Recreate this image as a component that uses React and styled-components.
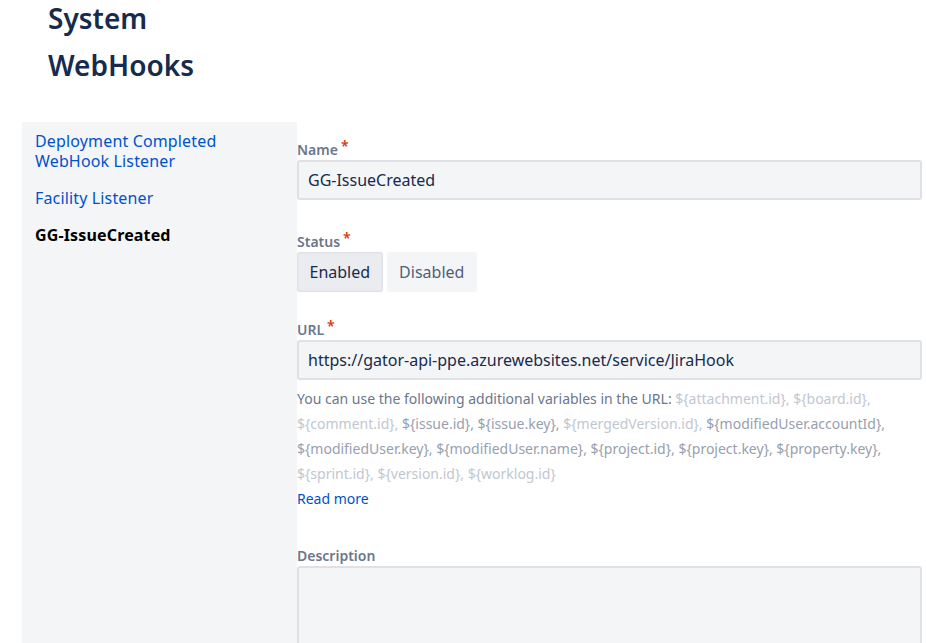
import React from "react";
import styled, { createGlobalStyle } from "styled-components";

const Global = createGlobalStyle`
  html, body { margin: 0; padding: 0; background: #fff; }
  body { font-family: "Noto Sans", "Open Sans", sans-serif; color: #172B4D; }
  * { box-sizing: border-box; }
`;

const Page = styled.div`
  width: 926px;
  height: 643px;
  overflow: hidden;
  display: flex;
  flex-direction: column;
`;

const Title = styled.h1`
  flex-shrink: 0;
  margin: -5px 0 0;
  padding: 0 0 0 48px;
  width: 240px;
  height: 127px;
  font-size: 28px;
  font-weight: 600;
  line-height: 47px;
  color: #172B4D;
`;

const Body = styled.div`
  display: flex;
  flex: 1 0 auto;
  padding-left: 22px;
`;

const Sidebar = styled.nav`
  width: 275px;
  flex-shrink: 0;
  background: #F4F5F7;
  padding: 9px 13px;
  display: flex;
  flex-direction: column;
  gap: 17px;
`;

const NavItem = styled.a`
  font-size: 16px;
  line-height: 20px;
  letter-spacing: 0.15px;
  color: ${(p) => (p.$active ? "#000" : "#0052CC")};
  font-weight: ${(p) => (p.$active ? 700 : 400)};
  text-decoration: none;
`;

const Form = styled.div`
  flex: 1;
  padding: 20px 4px 0 0;
  display: flex;
  flex-direction: column;
`;

const Field = styled.div`
  display: flex;
  flex-direction: column;
  margin-bottom: ${(p) => p.$mb || 0}px;
`;

const Label = styled.label`
  font-size: 14px;
  font-weight: 600;
  line-height: 16px;
  color: #6B778C;
  margin-bottom: 2px;
`;

const Req = styled.span`
  color: #DE350B;
  margin-left: 3px;
  position: relative;
  top: -4px;
`;

const Input = styled.div`
  height: 40px;
  background: #F4F5F7;
  border: 2px solid #DFE1E6;
  border-radius: 3px;
  padding: 0 9px;
  display: flex;
  align-items: center;
  font-size: 16px;
  color: #172B4D;
`;

const TextArea = styled.div`
  height: 120px;
  background: #F4F5F7;
  border: 2px solid #DFE1E6;
  border-radius: 3px;
`;

const Toggle = styled.div`
  display: flex;
  gap: 4px;
`;

const ToggleBtn = styled.button`
  height: 40px;
  padding: 0 12.5px;
  border: none;
  border-radius: 3px;
  font-family: inherit;
  font-size: 16px;
  color: ${(p) => (p.$on ? "#172B4D" : "#505F79")};
  background: ${(p) => (p.$on ? "#EBECF0" : "#F4F5F7")};
  box-shadow: ${(p) => (p.$on ? "inset 0 0 3px rgba(9,30,66,0.12)" : "none")};
`;

const Help = styled.p`
  margin: 6px 0 0;
  font-size: 14px;
  line-height: 25px;
  color: #6B778C;
`;

const Var = styled.span`
  color: ${(p) => (p.$dim ? "#C1C7D0" : "#97A0AF")};
`;

const Link = styled.a`
  display: block;
  font-size: 14px;
  line-height: 25px;
  color: #0052CC;
  text-decoration: none;
`;

const vars = [
  ["attachment.id", true],
  ["board.id", true],
  ["comment.id", true],
  ["issue.id", false],
  ["issue.key", false],
  ["mergedVersion.id", true],
  ["modifiedUser.accountId", false],
  ["modifiedUser.key", false],
  ["modifiedUser.name", false],
  ["project.id", false],
  ["project.key", false],
  ["property.key", false],
  ["sprint.id", true],
  ["version.id", true],
  ["worklog.id", true],
];

export default function App() {
  return (
    <Page>
      <Global />
      <Title>System WebHooks</Title>
      <Body>
        <Sidebar>
          <NavItem href="#">Deployment Completed WebHook Listener</NavItem>
          <NavItem href="#">Facility Listener</NavItem>
          <NavItem $active>GG-IssueCreated</NavItem>
        </Sidebar>
        <Form>
          <Field $mb={34}>
            <Label>Name<Req>*</Req></Label>
            <Input>GG-IssueCreated</Input>
          </Field>
          <Field $mb={30}>
            <Label>Status<Req>*</Req></Label>
            <Toggle>
              <ToggleBtn $on>Enabled</ToggleBtn>
              <ToggleBtn>Disabled</ToggleBtn>
            </Toggle>
          </Field>
          <Field $mb={37}>
            <Label>URL<Req>*</Req></Label>
            <Input>https://gator-api-ppe.azurewebsites.net/service/JiraHook</Input>
            <Help>
              You can use the following additional variables in the URL:{" "}
              {vars.map(([v, dim], i) => (
                <React.Fragment key={v}>
                  <Var $dim={dim}>
                    {"${" + v + "}"}
                    {i < vars.length - 1 ? "," : ""}
                  </Var>{" "}
                </React.Fragment>
              ))}
            </Help>
            <Link href="#">Read more</Link>
          </Field>
          <Field>
            <Label>Description</Label>
            <TextArea />
          </Field>
        </Form>
      </Body>
    </Page>
  );
}
